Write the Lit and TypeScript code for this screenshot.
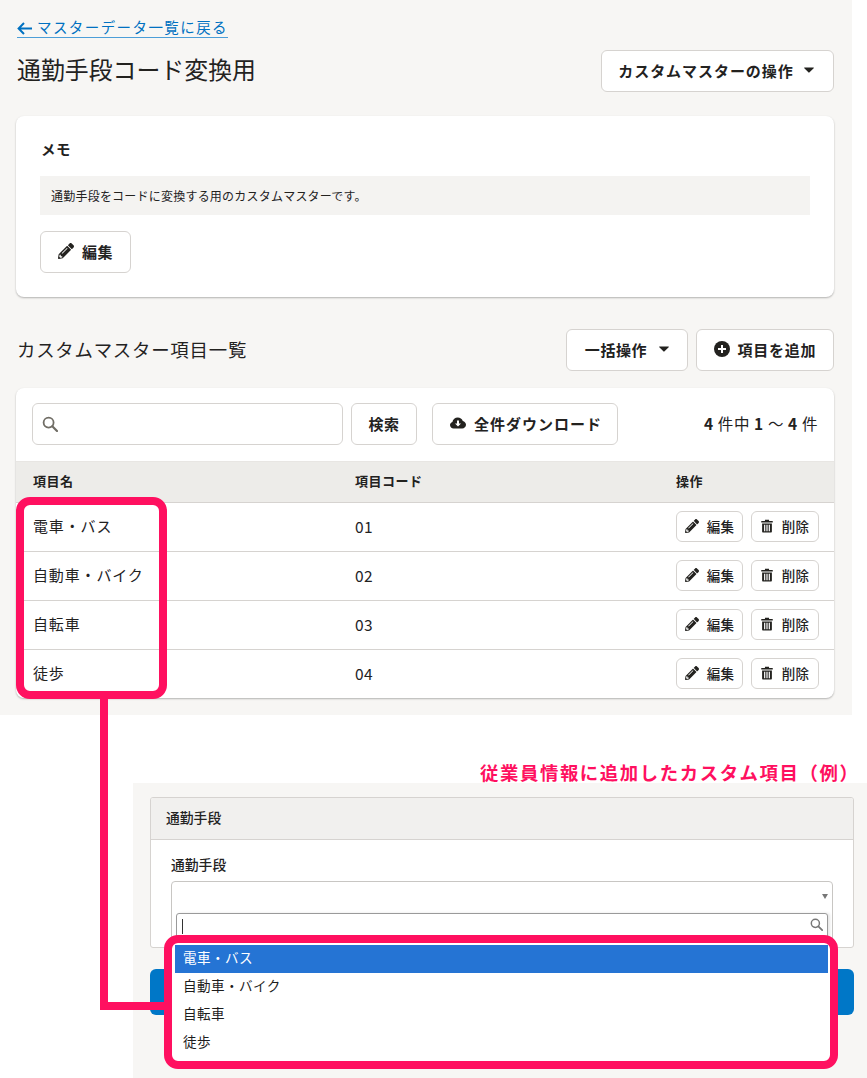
import { LitElement, html, css, svg } from "lit";
import { customElement } from "lit/decorators.js";

const pencilPath = "M497.9 142.1l-46.1 46.1c-4.7 4.7-12.3 4.7-17 0l-111-111c-4.7-4.7-4.7-12.3 0-17l46.1-46.1c18.7-18.7 49.1-18.7 67.9 0l60.1 60.1c18.8 18.7 18.8 49.1 0 67.9zM284.2 99.8L21.6 362.4.4 483.9c-2.9 16.4 11.4 30.6 27.8 27.8l121.5-21.3 262.6-262.6c4.7-4.7 4.7-12.3 0-17l-111-111c-4.8-4.7-12.4-4.7-17.1 0zM124.1 339.9c-5.5-5.5-5.5-14.3 0-19.8l154-154c5.5-5.5 14.3-5.5 19.8 0s5.5 14.3 0 19.8l-154 154c-5.5 5.5-14.3 5.5-19.8 0zM88 424h48v36.3l-64.5 11.3-31.1-31.1L51.7 376H88v48z";

const pencil = (cls: string) => html`<svg class=${cls} viewBox="0 0 512 512" fill="#23221f"><path d=${pencilPath}></path></svg>`;
const trash = html`<svg class="ic-trash" viewBox="0 0 14 16" fill="#23221f"><path fill-rule="evenodd" d="M4.6 0.6h4.8v1.5h4.3v1.7H0.3V2.1h4.3zM1.3 5h11.4v9.4c0 .7-.5 1.2-1.2 1.2h-9c-.7 0-1.2-.5-1.2-1.2zM3.6 6.6v7.4h1.4V6.6zM6.3 6.6v7.4h1.4V6.6zM9 6.6v7.4h1.4V6.6z"></path></svg>`;
const caret = html`<svg class="ic-caret" viewBox="0 0 10 6" fill="#23221f"><path d="M0.6 0.4h8.8c.4 0 .6.5.3.8L5.3 5.5c-.2.2-.5.2-.7 0L.3 1.2C0 .9.2.4.6.4z"></path></svg>`;
const search = (cls: string, c: string) => html`<svg class=${cls} viewBox="0 0 16 16" fill="none" stroke=${c} stroke-width="1.8"><circle cx="6.6" cy="6.6" r="5"></circle>${svg`<path d="M10.3 10.3L15 15" stroke-width="2.2" stroke-linecap="round"></path>`}</svg>`;
const plusCircle = html`<svg class="ic-plus" viewBox="0 0 16 16"><circle cx="8" cy="8" r="8" fill="#23221f"></circle><path d="M8 4v8M4 8h8" stroke="#fff" stroke-width="2"></path></svg>`;
const cloud = html`<svg class="ic-cloud" viewBox="0 0 16 12"><path fill="#23221f" d="M3.6 11.5C1.6 11.5 0 10 0 8.1c0-1.5 1-2.8 2.4-3.2C2.8 2.4 5.1.4 7.8.4c2.3 0 4.3 1.4 5 3.5 1.8.4 3.2 2 3.2 3.9 0 2-1.7 3.7-3.8 3.7z"></path><path fill="#fff" d="M7 3.6h2v3h2L8 9.6l-3-3h2z"></path></svg>`;
const backArrow = html`<svg class="ic-back" viewBox="0 0 15 13" fill="none" stroke="#0071c1" stroke-width="2"><path d="M15 6.5H2M7 1L1.6 6.5 7 12"></path></svg>`;

const rows = [
  ["電車・バス", "01"],
  ["自動車・バイク", "02"],
  ["自転車", "03"],
  ["徒歩", "04"],
];
const options = ["電車・バス", "自動車・バイク", "自転車", "徒歩"];

@customElement("app-root")
export class AppRoot extends LitElement {
  static styles = css`
    :host {
      display: block;
      position: relative;
      width: 867px;
      height: 1078px;
      overflow: hidden;
      background: #fff;
      font-family: "Noto Sans CJK JP", "Noto Sans", sans-serif;
      color: #23221f;
    }
    button {
      font-family: inherit;
      color: inherit;
      background: #fff;
      border: 1px solid #d6d3d0;
      border-radius: 6px;
      display: inline-flex;
      align-items: center;
      justify-content: center;
      font-weight: 700;
      padding: 0;
      margin: 0;
      flex: none;
    }
    .btn-m {
      height: 42px;
      font-size: 15px;
      letter-spacing: 0.6px;
      padding-bottom: 2px;
    }
    .btn-s {
      height: 31px;
      font-size: 13.5px;
      letter-spacing: 0.2px;
      font-weight: 500;
      padding-bottom: 1px;
    }
    .top {
      width: 852px;
      height: 715px;
      box-sizing: border-box;
      background: #f7f6f4;
      padding: 17px 18px 0 16px;
    }
    .back-row {
      display: flex;
      height: 20px;
      padding-left: 1px;
    }
    .back {
      display: inline-flex;
      align-items: center;
      gap: 5px;
      color: #0071c1;
      font-size: 14.5px;
      line-height: 18px;
      letter-spacing: 1.42px;
      border-bottom: 1px solid #4c9ed8;
      height: 20px;
      width: 211px;
      white-space: nowrap;
    }
    .ic-back { width: 15px; height: 13px; flex: none; margin-top: 2px; }
    .title-row {
      display: flex;
      align-items: center;
      justify-content: space-between;
      margin-top: 13px;
      height: 42px;
    }
    h1 {
      margin: 0 0 0 1px;
      font-size: 23.9px;
      font-weight: 400;
      line-height: 38px;
      height: 42px;
      color: #23221f;
    }
    .ops { width: 233px; gap: 10px; font-size: 15px; letter-spacing: 0.95px; padding-right: 3px; }
    .ic-caret { width: 10px; height: 6px; flex: none; }
    .card {
      background: #fff;
      border-radius: 8px;
      box-shadow: 0 1px 2px rgba(0, 0, 0, 0.28);
    }
    .memo {
      margin-top: 24px;
      height: 181px;
      box-sizing: border-box;
      padding: 23px 24px 0;
    }
    .memo h2 {
      margin: 0 0 0 1px;
      font-size: 14.5px;
      line-height: 20px;
      font-weight: 700;
      letter-spacing: 0.5px;
    }
    .note {
      margin-top: 17px;
      height: 39px;
      background: #f4f3f1;
      padding-left: 11px;
      font-size: 12px;
      line-height: 39px;
      letter-spacing: 0.22px;
    }
    .edit-l { margin-top: 16px; width: 91px; gap: 8px; }
    .ic-pen-l { width: 16px; height: 16px; }
    .ic-pen-s { width: 14px; height: 14px; margin-right: 8px; }
    .ic-trash { width: 12px; height: 14px; margin-right: 9px; }
    .list-head {
      margin-top: 32px;
      display: flex;
      align-items: center;
      height: 42px;
    }
    .list-head h2 {
      margin: 0 auto 0 1px;
      font-size: 18.4px;
      font-weight: 400;
      letter-spacing: 0.78px;
      line-height: 40px;
      height: 42px;
    }
    .bulk { width: 122px; gap: 12px; }
    .add { width: 138px; margin-left: 8px; gap: 8px; letter-spacing: 0.75px; }
    .ic-plus { width: 16px; height: 16px; }
    .table-card {
      margin-top: 17px;
      height: 310px;
      overflow: hidden;
    }
    .toolbar {
      display: flex;
      align-items: center;
      height: 72px;
      padding: 0 16px;
      box-sizing: border-box;
    }
    .input {
      width: 311px;
      height: 42px;
      box-sizing: border-box;
      border: 1px solid #d6d3d0;
      border-radius: 6px;
      display: flex;
      align-items: center;
      padding-left: 9px;
      flex: none;
    }
    .ic-search { width: 16px; height: 16px; }
    .find { width: 66px; margin-left: 8px; }
    .dl { width: 186px; margin-left: 15px; gap: 8px; letter-spacing: 1px; padding-left: 2px; }
    .ic-cloud { width: 16px; height: 12px; }
    .count {
      margin-left: auto;
      font-size: 15.5px;
      letter-spacing: 0.6px;
      white-space: nowrap;
      padding-bottom: 2px;
    }
    .count b { font-weight: 700; }
    .grid-row {
      display: grid;
      grid-template-columns: 322px 321px 1fr;
      padding-left: 17px;
      align-items: center;
    }
    .thead {
      background: #edecE9;
      border-bottom: 1px solid #d6d3d0;
      border-top: 1px solid #e8e6e3;
      box-sizing: border-box;
      height: 42px;
      font-size: 13px;
      font-weight: 700;
      letter-spacing: 0.5px;
      padding-bottom: 3px;
      margin-top: 1px;
    }
    .tr {
      height: 49px;
      box-sizing: border-box;
      border-bottom: 1px solid #d6d3d0;
      font-size: 15px;
      letter-spacing: 0.86px;
    }
    .tr > .name { padding-bottom: 4px; }
    .tr > .code { padding-bottom: 2px; font-size: 15.5px; letter-spacing: 0.5px; }
    .tr:last-child { border-bottom-color: transparent; }
    .actions { display: flex; gap: 8px; padding-bottom: 1px; }
    .ed { width: 67px; }
    .del { width: 68px; }

    .note-label {
      position: absolute;
      left: 480px;
      top: 756px;
      font-size: 18.4px;
      line-height: 32px;
      font-weight: 700;
      letter-spacing: 1.58px;
      color: #ff1060;
      white-space: nowrap;
    }
    .bottom {
      position: absolute;
      left: 133px;
      top: 783px;
      right: 0;
      bottom: 0;
      background: #f7f6f4;
      padding: 14px 13px 0 17px;
      box-sizing: border-box;
    }
    .form-card {
      height: 151px;
      box-sizing: border-box;
      background: #fff;
      border: 1px solid #d6d3d0;
      border-radius: 3px;
      overflow: hidden;
    }
    .form-head {
      height: 42px;
      box-sizing: border-box;
      background: #f1f0ee;
      border-bottom: 1px solid #d6d3d0;
      padding-left: 15px;
      font-size: 13.8px;
      font-weight: 500;
      line-height: 39px;
    }
    .form-body { padding: 15px 20px 0; }
    .form-body label {
      display: block;
      font-size: 13.8px;
      line-height: 18px;
      font-weight: 500;
    }
    .select {
      margin-top: 8px;
      height: 66px;
      box-sizing: border-box;
      border: 1px solid #c8c6c3;
      border-radius: 4px;
      position: relative;
    }
    .sel-arrow {
      position: absolute;
      right: 4px;
      top: 12px;
      width: 6px;
      height: 5px;
    }
    .sel-search {
      position: absolute;
      left: 4px;
      right: 4px;
      top: 31px;
      height: 40px;
      border: 1px solid #9a9a9a;
      border-radius: 3px;
      box-sizing: border-box;
      background: #fff;
      box-shadow: 2px 0 3px rgba(0, 0, 0, 0.1);
    }
    .caret-bar {
      position: absolute;
      left: 5px;
      top: 5px;
      width: 1px;
      height: 15px;
      background: #333;
    }
    .ic-sel-search {
      position: absolute;
      right: 4px;
      top: 4px;
      width: 13px;
      height: 13px;
    }
    .submit {
      margin-top: 21px;
      height: 46px;
      background: #0077c7;
      border-radius: 6px;
    }
    .dropdown {
      position: absolute;
      left: 172px;
      top: 943px;
      width: 658px;
      height: 118px;
      background: #fff;
      padding: 2px 2px 0 3px;
      box-sizing: border-box;
      border-radius: 4px;
    }
    .opt {
      height: 28px;
      line-height: 25px;
      padding-left: 8px;
      font-size: 13.6px;
      letter-spacing: 0.4px;
      color: #1d1d1d;
    }
    .opt.sel { background: #2574d4; color: #fff; }
    .frame {
      position: absolute;
      border: 8px solid #ff1060;
      border-radius: 14px;
      box-sizing: border-box;
    }
    .f1 { left: 16px; top: 497px; width: 151px; height: 202px; }
    .f2 { left: 164px; top: 935px; width: 674px; height: 134px; }
    .line { position: absolute; background: #ff1060; }
    .l1 { left: 100px; top: 699px; width: 8px; height: 311px; }
    .l2 { left: 100px; top: 1002px; width: 64px; height: 8px; }
  `;

  render() {
    return html`
      <section class="top">
        <div class="back-row"><a class="back">${backArrow}<span>マスターデータ一覧に戻る</span></a></div>
        <div class="title-row">
          <h1>通勤手段コード変換用</h1>
          <button class="btn-m ops">カスタムマスターの操作 ${caret}</button>
        </div>
        <div class="card memo">
          <h2>メモ</h2>
          <div class="note">通勤手段をコードに変換する用のカスタムマスターです。</div>
          <button class="btn-m edit-l">${pencil("ic-pen-l")}編集</button>
        </div>
        <div class="list-head">
          <h2>カスタムマスター項目一覧</h2>
          <button class="btn-m bulk">一括操作 ${caret}</button>
          <button class="btn-m add">${plusCircle}項目を追加</button>
        </div>
        <div class="card table-card">
          <div class="toolbar">
            <div class="input">${search("ic-search", "#706d65")}</div>
            <button class="btn-m find">検索</button>
            <button class="btn-m dl">${cloud}全件ダウンロード</button>
            <div class="count"><b>4</b> 件中 <b>1</b> 〜 <b>4</b> 件</div>
          </div>
          <div class="grid-row thead"><span>項目名</span><span>項目コード</span><span>操作</span></div>
          ${rows.map(
            ([name, code]) => html`
              <div class="grid-row tr">
                <span class="name">${name}</span>
                <span class="code">${code}</span>
                <span class="actions">
                  <button class="btn-s ed">${pencil("ic-pen-s")}編集</button>
                  <button class="btn-s del">${trash}削除</button>
                </span>
              </div>
            `
          )}
        </div>
      </section>

      <div class="note-label">従業員情報に追加したカスタム項目（例）</div>

      <section class="bottom">
        <div class="form-card">
          <div class="form-head">通勤手段</div>
          <div class="form-body">
            <label>通勤手段</label>
            <div class="select">
              <svg class="sel-arrow" viewBox="0 0 6 5" fill="#777"><path d="M0 0h6L3 5z"></path></svg>
              <div class="sel-search">
                <span class="caret-bar"></span>
                ${search("ic-sel-search", "#777")}
              </div>
            </div>
          </div>
        </div>
        <div class="submit"></div>
      </section>

      <div class="dropdown">
        ${options.map((o, i) => html`<div class="opt ${i === 0 ? "sel" : ""}">${o}</div>`)}
      </div>

      <div class="frame f1"></div>
      <div class="frame f2"></div>
      <div class="line l1"></div>
      <div class="line l2"></div>
    `;
  }
}
